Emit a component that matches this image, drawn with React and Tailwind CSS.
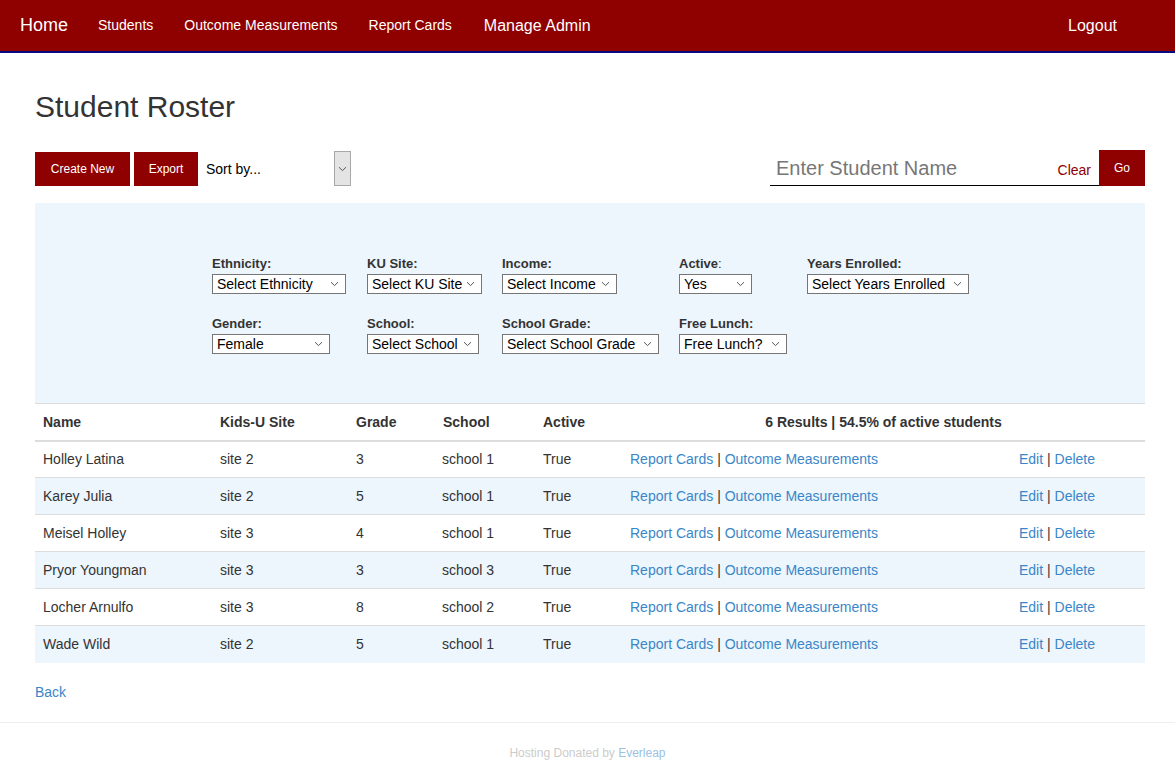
import React from 'react'

const RED = 'bg-[#8f0000]'

const STUDENTS = [
  ['Holley Latina', 'site 2', '3', 'school 1'],
  ['Karey Julia', 'site 2', '5', 'school 1'],
  ['Meisel Holley', 'site 3', '4', 'school 1'],
  ['Pryor Youngman', 'site 3', '3', 'school 3'],
  ['Locher Arnulfo', 'site 3', '8', 'school 2'],
  ['Wade Wild', 'site 2', '5', 'school 1'],
]

function Chevron() {
  return (
    <svg width="9" height="6" viewBox="0 0 9 6" className="shrink-0">
      <path d="M1 1.2 L4.5 4.6 L8 1.2" fill="none" stroke="#555" strokeWidth="1" />
    </svg>
  )
}

// fake native select so sizes don't depend on the browser
function FakeSelect({ value, width }) {
  return (
    <div className={`flex items-center justify-between h-[20px] border border-[#767676] bg-white pl-[4px] pr-[6px] text-[14px] leading-none text-black ${width}`}>
      <span className="whitespace-nowrap">{value}</span>
      <Chevron />
    </div>
  )
}

function Filter({ label, value, width }) {
  return (
    <div className="flex flex-col">
      <label className="text-[13px] font-bold text-[#333] leading-[16px] mb-[2px]">{label}</label>
      <FakeSelect value={value} width={width} />
    </div>
  )
}

export default function App() {
  return (
    <div className="min-h-[770px] bg-white font-['Liberation_Sans',Arial,sans-serif] text-[#333]">
      <nav className={`${RED} h-[53px] border-b-2 border-[#0a0a80] flex items-center text-white`}>
        <a className="ml-[20px] text-[18px]">Home</a>
        <a className="ml-[30px] text-[14px]">Students</a>
        <a className="ml-[31px] text-[14px]">Outcome Measurements</a>
        <a className="ml-[31px] text-[14px]">Report Cards</a>
        <a className="ml-[32px] text-[16px]">Manage Admin</a>
        <a className="ml-auto mr-[58px] text-[16px]">Logout</a>
      </nav>

      <div className="pl-[35px] pr-[30px]">
        <h1 className="text-[30px] leading-[36px] mt-[36px] mb-[25px]">Student Roster</h1>

        <div className="flex items-end justify-between h-[36px]">
          <div className="flex items-start h-full">
            <button className={`${RED} text-white text-[12px] w-[95px] h-[34px] mt-[2px]`}>Create New</button>
            <button className={`${RED} text-white text-[12px] w-[64px] h-[34px] mt-[2px] ml-[4px]`}>Export</button>
            <div className="ml-[8px] w-[145px] h-[36px] flex items-center justify-between text-[14px] text-black">
              <span className="mt-[2px]">Sort by...</span>
              <div className="w-[17px] h-[35px] mt-[1px] bg-[#e4e4e4] border border-[#a8a8a8] flex items-center justify-center">
                <Chevron />
              </div>
            </div>
          </div>
          <div className="flex items-stretch h-full">
            <div className="w-[329px] border-b border-black flex items-center justify-between pl-[6px] pr-[8px]">
              <span className="text-[20px] text-[#777] mt-[1px]">Enter Student Name</span>
              <span className="text-[14px] text-[#8f0000] mt-[6px]">Clear</span>
            </div>
            <button className={`${RED} text-white text-[12px] w-[46px] h-[36px]`}>Go</button>
          </div>
        </div>

        <div className="mt-[17px] h-[200px] bg-[#edf5fd] pl-[177px] pt-[53px]">
          <div className="flex">
            <div className="w-[155px] flex flex-col gap-[22px]">
              <Filter label="Ethnicity:" value="Select Ethnicity" width="w-[134px]" />
              <Filter label="Gender:" value="Female" width="w-[118px]" />
            </div>
            <div className="w-[135px] flex flex-col gap-[22px]">
              <Filter label="KU Site:" value="Select KU Site" width="w-[115px]" />
              <Filter label="School:" value="Select School" width="w-[112px]" />
            </div>
            <div className="w-[177px] flex flex-col gap-[22px]">
              <Filter label="Income:" value="Select Income" width="w-[115px]" />
              <Filter label="School Grade:" value="Select School Grade" width="w-[157px]" />
            </div>
            <div className="w-[128px] flex flex-col gap-[22px]">
              <Filter label={<>Active<span className="font-normal">:</span></>} value="Yes" width="w-[73px]" />
              <Filter label="Free Lunch:" value="Free Lunch?" width="w-[108px]" />
            </div>
            <div className="flex flex-col gap-[22px]">
              <Filter label="Years Enrolled:" value="Select Years Enrolled" width="w-[162px]" />
            </div>
          </div>
        </div>

        <table className="w-full border-collapse text-[14px] table-fixed">
          <colgroup>
            <col className="w-[177px]" />
            <col className="w-[136px]" />
            <col className="w-[87px]" />
            <col className="w-[100px]" />
            <col className="w-[87px]" />
            <col className="w-[389px]" />
            <col />
          </colgroup>
          <thead>
            <tr className="h-[37px] border-t border-b-2 border-[#ddd] text-left">
              <th className="pl-[8px] pt-[2px] font-bold">Name</th>
              <th className="pl-[8px] pt-[2px] font-bold">Kids-U Site</th>
              <th className="pl-[8px] pt-[2px] font-bold">Grade</th>
              <th className="pl-[8px] pt-[2px] font-bold">School</th>
              <th className="pl-[8px] pt-[2px] font-bold">Active</th>
              <th colSpan={2} className="text-center pt-[2px] font-bold">6 Results | 54.5% of active students</th>
            </tr>
          </thead>
          <tbody>
            {STUDENTS.map((s, i) => (
              <tr key={s[0]} className={`h-[37px] ${i < STUDENTS.length - 1 ? 'border-b' : ''} border-[#ddd] ${i % 2 ? 'bg-[#edf5fd]' : ''}`}>
                <td className="pl-[8px]">{s[0]}</td>
                <td className="pl-[8px]">{s[1]}</td>
                <td className="pl-[8px]">{s[2]}</td>
                <td className="pl-[7px]">{s[3]}</td>
                <td className="pl-[8px]">True</td>
                <td className="pl-[8px]">
                  <a className="text-[#3a86c8]">Report Cards</a> | <a className="text-[#3a86c8]">Outcome Measurements</a>
                </td>
                <td className="pl-[8px]">
                  <a className="text-[#3a86c8]">Edit</a> | <a className="text-[#3a86c8]">Delete</a>
                </td>
              </tr>
            ))}
          </tbody>
        </table>

        <div className="mt-[19px] text-[14px]">
          <a className="text-[#3a86c8]">Back</a>
        </div>
      </div>

      <hr className="mt-[19px] border-t border-[#eee]" />
      <footer className="text-center text-[12px] text-[#ccc] pt-[21px] pb-[10px]">
        Hosting Donated by <a className="text-[#9cc1e4]">Everleap</a>
      </footer>
    </div>
  )
}
